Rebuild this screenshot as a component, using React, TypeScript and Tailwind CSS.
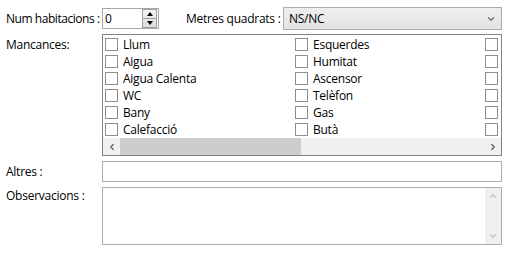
import { ChevronDown, ChevronUp, ChevronLeft, ChevronRight } from 'lucide-react'

const col1 = ['Llum', 'Aigua', 'Aigua Calenta', 'WC', 'Bany', 'Calefacció']
const col2 = ['Esquerdes', 'Humitat', 'Ascensor', 'Telèfon', 'Gas', 'Butà']
const col3 = ['', '', '', '', '', '']

const Check = ({ label }: { label: string }) => (
    <div className="flex items-center h-[17px]">
        <span className="w-[13px] h-[13px] border border-[#8e8e8e] bg-white shrink-0" />
        <span className="ml-[5px] whitespace-nowrap">{label}</span>
    </div>
)

const Column = ({ items }: { items: string[] }) => (
    <div className="w-[190px] shrink-0 flex flex-col">
        {items.map((l, i) => (
            <Check key={i} label={l} />
        ))}
    </div>
)

export default function App() {
    return (
        <div
            className="w-[510px] h-[263px] bg-white text-[12px] tracking-[-0.25px] text-black pl-[6px] pt-[7px] whitespace-nowrap"
            style={{ fontFamily: '"Open Sans", "Noto Sans", sans-serif' }}
        >
            {/* top row */}
            <div className="flex items-center h-[23px]">
                <div className="w-[96px] tracking-[-0.45px]">Num habitacions :</div>
                <div className="w-[57px] h-[21px] border border-[#a9a9a9] flex items-center bg-white">
                    <span className="pl-[2px] flex-1">0</span>
                    <div className="w-[15px] h-[19px] mr-[1px] flex flex-col border border-[#a0a0a0] bg-gradient-to-b from-[#f4f4f4] to-[#dcdcdc]">
                        <div className="flex-1 flex items-center justify-center border-b border-[#a0a0a0]">
                            <span className="w-0 h-0 border-l-[3px] border-r-[3px] border-b-[4px] border-l-transparent border-r-transparent border-b-black" />
                        </div>
                        <div className="flex-1 flex items-center justify-center">
                            <span className="w-0 h-0 border-l-[3px] border-r-[3px] border-t-[4px] border-l-transparent border-r-transparent border-t-black" />
                        </div>
                    </div>
                </div>
                <div className="ml-[27px] w-[97px]">Metres quadrats :</div>
                <div className="w-[219px] h-[23px] border border-[#acacac] bg-gradient-to-b from-[#efefef] to-[#e3e3e3] flex items-center">
                    <span className="pl-[5px] flex-1">NS/NC</span>
                    <ChevronDown className="w-[10px] h-[10px] mr-[5px] text-[#707070]" strokeWidth={3} />
                </div>
            </div>

            {/* Mancances */}
            <div className="flex mt-[4px]">
                <div className="w-[96px] pt-[2px]">Mancances:</div>
                <div className="w-[400px] h-[122px] border border-[#828282] flex flex-col overflow-hidden">
                    <div className="flex pl-[2px] pt-[1px] h-[103px] overflow-hidden">
                        <Column items={col1} />
                        <Column items={col2} />
                        <Column items={col3} />
                    </div>
                    <div className="h-[17px] bg-[#f0f0f0] flex items-center">
                        <div className="w-[17px] flex items-center justify-center">
                            <ChevronLeft className="w-[10px] h-[10px] text-[#606060]" strokeWidth={3} />
                        </div>
                        <div className="w-[181px] h-[17px] bg-[#cdcdcd]" />
                        <div className="flex-1" />
                        <div className="w-[17px] flex items-center justify-center">
                            <ChevronRight className="w-[10px] h-[10px] text-[#606060]" strokeWidth={3} />
                        </div>
                    </div>
                </div>
            </div>

            {/* Altres */}
            <div className="flex items-center mt-[5px]">
                <div className="w-[96px]">Altres :</div>
                <div className="w-[400px] h-[21px] border border-[#abadb3] bg-white" />
            </div>

            {/* Observacions */}
            <div className="flex mt-[5px]">
                <div className="w-[96px]">Observacions :</div>
                <div className="w-[400px] h-[58px] border border-[#abadb3] bg-white flex justify-end">
                    <div className="w-[16px] h-full bg-[#f0f0f0] flex flex-col items-center justify-between py-[3px]">
                        <ChevronUp className="w-[10px] h-[10px] text-[#c0c0c0]" strokeWidth={3} />
                        <ChevronDown className="w-[10px] h-[10px] text-[#c0c0c0]" strokeWidth={3} />
                    </div>
                </div>
            </div>
        </div>
    )
}
